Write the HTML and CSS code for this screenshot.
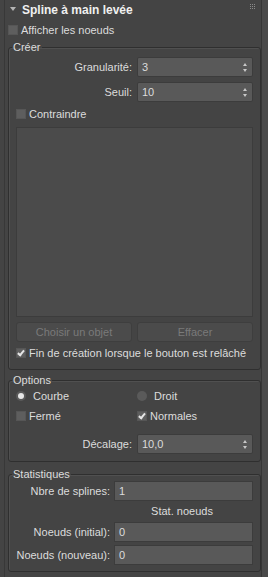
FILE: index.html
```html
<!DOCTYPE html>
<html lang="fr">
<head>
    <meta charset="UTF-8">
    <title>Spline à main levée</title>
    <link rel="stylesheet" href="styles.css">
</head>
<body>
    <div class="panel">
        <div class="rollout">
            <div class="rollout-head">
                <span class="arrow"></span>
                <span class="title">Spline à main levée</span>
                <span class="grip">
                    <svg width="6" height="6" viewBox="0 0 6 6"><g fill="#8a8a8a"><rect x="0" y="0" width="1" height="1"/><rect x="2" y="0" width="1" height="1"/><rect x="4" y="0" width="1" height="1"/><rect x="0" y="2" width="1" height="1"/><rect x="2" y="2" width="1" height="1"/><rect x="4" y="2" width="1" height="1"/><rect x="0" y="4" width="1" height="1"/><rect x="2" y="4" width="1" height="1"/><rect x="4" y="4" width="1" height="1"/></g></svg>
                </span>
            </div>
            <label class="check top-check"><span class="box"></span>Afficher les noeuds</label>

            <fieldset class="group creer">
                <legend>Créer</legend>
                <div class="row">
                    <span class="lbl">Granularité:</span>
                    <div class="spinner"><span>3</span><span class="spin"></span></div>
                </div>
                <div class="row">
                    <span class="lbl">Seuil:</span>
                    <div class="spinner"><span>10</span><span class="spin"></span></div>
                </div>
                <label class="check constrain"><span class="box"></span>Contraindre</label>
                <div class="list"></div>
                <div class="buttons">
                    <button disabled>Choisir un objet</button>
                    <button disabled>Effacer</button>
                </div>
                <label class="check release"><span class="box on"></span>Fin de création lorsque le bouton est relâché</label>
            </fieldset>

            <fieldset class="group options">
                <legend>Options</legend>
                <div class="pair">
                    <label class="radio"><span class="dot on"></span>Courbe</label>
                    <label class="radio"><span class="dot"></span>Droit</label>
                </div>
                <div class="pair second">
                    <label class="check"><span class="box"></span>Fermé</label>
                    <label class="check"><span class="box on"></span>Normales</label>
                </div>
                <div class="row offset">
                    <span class="lbl">Décalage:</span>
                    <div class="spinner"><span>10,0</span><span class="spin"></span></div>
                </div>
            </fieldset>

            <fieldset class="group stats">
                <legend>Statistiques</legend>
                <div class="row wide">
                    <span class="lbl">Nbre de splines:</span>
                    <div class="field">1</div>
                </div>
                <div class="sub">Stat. noeuds</div>
                <div class="row wide first-node">
                    <span class="lbl">Noeuds (initial):</span>
                    <div class="field">0</div>
                </div>
                <div class="row wide">
                    <span class="lbl">Noeuds (nouveau):</span>
                    <div class="field">0</div>
                </div>
            </fieldset>
        </div>
        <div class="scrollbar"></div>
    </div>
</body>
</html>
```

FILE: styles.css
```css
body { margin: 0; background: #444444; font-family: "Liberation Sans", Arial, sans-serif; font-size: 11px; color: #dcdcdc; white-space: nowrap; }
.panel { display: flex; width: 268px; height: 577px; overflow: hidden; }
.rollout { width: 258px; margin-left: 4px; border-left: 1px solid #383838; box-sizing: border-box; }
.scrollbar { width: 6px; border-left: 1px solid #363636; background: #4a4a4a; }

.rollout-head { display: flex; align-items: center; height: 20px; padding-left: 5px; }
.arrow { width: 0; height: 0; border-left: 3px solid transparent; border-right: 3px solid transparent; border-top: 4px solid #b4b4b4; margin-right: 6px; margin-top: -2px; }
.title { font-weight: bold; font-size: 12px; color: #f0f0f0; flex: 1; }
.grip { margin-right: 5px; margin-top: -6px; display: flex; }

.check { display: flex; align-items: center; height: 16px; }
.box { width: 8px; height: 8px; background: #5e5e5e; border: 1px solid #565656; margin-right: 3px; position: relative; flex: none; }
.box.on::after { content: ""; position: absolute; left: 2px; top: 0; width: 2px; height: 5px; border-right: 2px solid #e6e6e6; border-bottom: 2px solid #e6e6e6; transform: rotate(40deg); }
.top-check { padding-left: 3px; margin-top: 2px; }

.group { border: 1px solid #2f2f2f; border-radius: 3px; margin: 0 0 0 3px; width: 253px; min-width: 0; box-sizing: border-box; padding: 3px 7px 8px 7px; box-shadow: inset 1px 1px 0 #505050; }
.group legend { padding: 0 1px; margin-left: -4px; line-height: 14px; color: #dcdcdc; }
.creer { margin-top: 2px; }
.options { margin-top: 3px; padding-top: 0; padding-bottom: 7px; }
.stats { margin-top: 5px; padding-top: 0; padding-bottom: 6px; }

.row { display: flex; align-items: center; height: 20px; margin-bottom: 5px; }
.lbl { width: 116px; text-align: right; padding-right: 5px; flex: none; }
.spinner { flex: 1; min-width: 0; height: 20px; background: #595959; display: flex; align-items: center; padding-left: 4px; border: 1px solid #3c3c3c; border-radius: 2px; box-sizing: border-box; }
.spinner span:first-child { flex: 1; }
.spin { width: 5px; height: 9px; margin-right: 4px; position: relative; }
.spin::before, .spin::after { content: ""; position: absolute; left: 0; width: 0; height: 0; border-left: 2.5px solid transparent; border-right: 2.5px solid transparent; }
.spin::before { top: 0; border-bottom: 3px solid #c8c8c8; }
.spin::after { bottom: 0; border-top: 3px solid #c8c8c8; }

.constrain { margin-top: -1px; }
.list { height: 190px; background: #4b4b4b; border: 1px solid #3c3c3c; margin-top: 5px; box-sizing: border-box; }
.buttons { display: flex; gap: 5px; margin-top: 5px; }
.buttons button { flex: 1; min-width: 0; height: 20px; background: #4b4b4b; border: 1px solid #3e3e3e; border-radius: 3px; color: #7a7a7a; font: inherit; font-size: 11px; }
.release { margin-top: 3px; }

.pair { display: flex; height: 18px; align-items: center; }
.pair > :first-child { width: 121px; flex: none; }
.pair > :last-child { flex: 1; min-width: 0; }
.second { margin-top: 2px; }
.radio { display: flex; align-items: center; }
.dot { width: 10px; height: 10px; border-radius: 50%; background: #5a5a5a; margin-right: 7px; position: relative; flex: none; }
.dot.on::after { content: ""; position: absolute; left: 2px; top: 2px; width: 6px; height: 6px; border-radius: 50%; background: #e8e8e8; }
.offset { margin-top: 9px; margin-bottom: 0; }

.wide .lbl { width: 94px; padding-right: 4px; }
.stats .row { margin-bottom: 0; }
.first-node { margin-top: 2px; margin-bottom: 3px !important; }
.field { flex: 1; min-width: 0; height: 20px; background: #595959; border: 1px solid #3c3c3c; box-sizing: border-box; padding-left: 4px; display: flex; align-items: center; }
.sub { text-align: center; padding-left: 95px; height: 18px; line-height: 18px; margin-top: 1px; }
```
